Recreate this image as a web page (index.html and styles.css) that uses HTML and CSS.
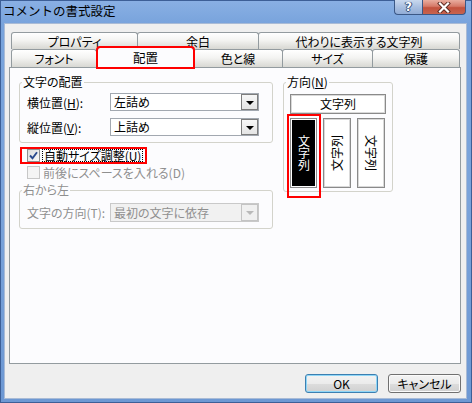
FILE: index.html
```html
<!DOCTYPE html>
<html lang="ja">
<head>
<meta charset="utf-8">
<title>コメントの書式設定</title>
<link rel="stylesheet" href="styles.css">
</head>
<body>
<div class="window">
  <div class="titlebar">
    <span class="title">コメントの書式設定</span>
    <div class="caption">
      <span class="cbtn help">?</span>
      <span class="cbtn close">
        <svg width="14" height="11" viewBox="0 0 14 11"><path d="M3 1.5 L11 9.5 M11 1.5 L3 9.5" stroke="#5a2a22" stroke-width="4" stroke-linecap="square"/><path d="M3 1.5 L11 9.5 M11 1.5 L3 9.5" stroke="#fff" stroke-width="2.2" stroke-linecap="square"/></svg>
      </span>
    </div>
  </div>
  <div class="client">
    <div class="tabrow row1">
      <div class="tab t-prop">プロパティ</div>
      <div class="tab t-margin">余白</div>
      <div class="tab t-alt">代わりに表示する文字列</div>
    </div>
    <div class="tabrow row2">
      <div class="tab t-font">フォント</div>
      <div class="tab t-align selected">配置</div>
      <div class="tab t-color">色と線</div>
      <div class="tab t-size">サイズ</div>
      <div class="tab t-protect">保護</div>
    </div>
    <div class="panel">
      <div class="col-left">
        <fieldset class="group g-align">
          <legend>文字の配置</legend>
          <div class="g-body">
            <div class="field"><span class="label">横位置(<u>H</u>):</span><div class="combo"><span class="value">左詰め</span><span class="arrow"></span></div></div>
            <div class="field"><span class="label">縦位置(<u>V</u>):</span><div class="combo"><span class="value">上詰め</span><span class="arrow"></span></div></div>
          </div>
        </fieldset>
        <div class="check-row highlight">
          <span class="checkbox checked"><svg width="11" height="11" viewBox="0 0 11 11"><path d="M2 5.5 L4.5 8.2 L9 2.2" fill="none" stroke="#2b4a8e" stroke-width="1.9"/></svg></span>
          <span class="focus-text">自動サイズ調整(<u>U</u>)</span>
        </div>
        <div class="check-row disabled">
          <span class="checkbox"></span>
          <span>前後にスペースを入れる(D)</span>
        </div>
        <fieldset class="group g-rtl disabled">
          <legend>右から左</legend>
          <div class="g-body">
            <div class="field"><span class="label">文字の方向(T):</span><div class="combo combo-disabled"><span class="value">最初の文字に依存</span><span class="arrow"></span></div></div>
          </div>
        </fieldset>
      </div>
      <div class="col-right">
        <fieldset class="group g-orient">
          <legend>方向(<u>N</u>)</legend>
          <div class="g-body orient-body">
            <div class="orient-h">文字列</div>
            <div class="orient-row">
              <div class="vbtn v-upright selected"><span>文字列</span></div>
              <div class="vbtn v-ccw"><span>文字列</span></div>
              <div class="vbtn v-cw"><span>文字列</span></div>
            </div>
          </div>
        </fieldset>
      </div>
    </div>
    <div class="buttons">
      <button class="btn default">OK</button>
      <button class="btn">キャンセル</button>
    </div>
  </div>
</div>
</body>
</html>
```

FILE: styles.css
```css
* { box-sizing: border-box; }
html, body { margin: 0; padding: 0; }
body {
  width: 472px;
  height: 403px;
  overflow: hidden;
  font-family: "Noto Sans CJK JP", "Noto Sans", sans-serif;
  font-size: 12px;
  color: #000;
  font-feature-settings: "palt";
}

.window {
  width: 472px;
  height: 403px;
  display: flex;
  flex-direction: column;
  padding: 0 5px 4px 4px;
  background: linear-gradient(#8ab0e4, #78a3dc 24px, #7aa3da 200px, #6d98d3);
  box-shadow: inset 0 0 0 1px #3d5f97;
}

.titlebar {
  height: 23px;
  flex: none;
  display: flex;
  justify-content: space-between;
  align-items: flex-start;
}
.title {
  margin-left: -1px;
  line-height: 22px;
  font-size: 12.5px;
  font-feature-settings: normal;
}
.caption { display: flex; margin-right: 1px; }
.cbtn {
  height: 15px;
  border: 1px solid #3b5886;
  border-top: none;
  display: flex;
  align-items: center;
  justify-content: center;
}
.help {
  width: 28px;
  border-right: none;
  border-radius: 0 0 0 4px;
  background: linear-gradient(#c9d8ee, #a9bfe0 50%, #91acd6);
  color: #fff;
  font: bold 12px "DejaVu Sans", sans-serif;
  text-shadow: 0 0 1px #203a66, 1px 0 0 #3a5580, -1px 0 0 #3a5580, 0 1px 0 #3a5580;
}
.close {
  width: 44px;
  border-radius: 0 0 4px 0;
  background: linear-gradient(#e9ad9f, #d57968 45%, #c2513d 55%, #c8644e);
}

.client {
  flex: 1;
  display: flex;
  flex-direction: column;
  background: #efefef;
  border: 1px solid #a9bbd6;
  padding: 8px 5px 0 4px;
}

.tabrow { display: flex; margin: 0 1px 0 2px; flex: none; }
.row1 { height: 17px; }
.row2 { height: 18px; }
.tab {
  border: 1px solid #939b9f;
  border-bottom: none;
  border-radius: 3px 3px 0 0;
  background: linear-gradient(#ffffff, #f4f4f2 45%, #e2e2de 80%, #d8d8d3);
  display: flex;
  align-items: center;
  justify-content: center;
  line-height: 1;
  padding-top: 1px;
}
.tab + .tab { margin-left: -1px; }
.t-prop { width: 127px; }
.t-margin { width: 122px; }
.t-alt { width: 202px; }
.t-font { width: 86px; }
.t-align { width: 97px; }
.t-color { width: 90px; }
.t-size { width: 91px; }
.t-protect { width: 88px; }
.tab.selected {
  margin-left: 0;
  margin-top: -2px;
  height: 21px;
  margin-bottom: -1px;
  background: #fcfcfe;
  position: relative;
  z-index: 2;
  font-size: 12.5px;
  outline: 2px solid #ff0000;
  outline-offset: -1px;
}
.tab.selected + .tab { margin-left: -1px; }

.panel {
  height: 297px;
  flex: none;
  background: #fcfcfe;
  border: 1px solid #939b9f;
  display: flex;
  align-items: flex-start;
  gap: 10px;
  padding: 7px 0 0 9px;
}
.col-left { width: 254px; display: flex; flex-direction: column; }
.col-right { width: 110px; }

.group {
  margin: 0;
  padding: 0;
  min-width: 0;
  border: 1px solid #d3d3cb;
  border-radius: 3px;
}
.group legend {
  margin-left: 2px;
  padding: 0 1px;
  line-height: 14px;
  height: 14px;
}
.g-body {
  display: flex;
  flex-direction: column;
  gap: 7px;
  padding: 4px 13px 6px 7px;
}
.g-rtl .g-body { padding: 6px 13px 6px 7px; }
.disabled { color: #8f8f8f; }

.field { display: flex; align-items: center; }
.label { width: 83px; flex: none; }
.combo {
  width: 149px;
  height: 18px;
  border: 1px solid #a2a8b0;
  background: #fff;
  display: flex;
  align-items: center;
}
.combo-disabled { height: 19px; background: #f1f1f1; border-color: #c9c9c9; }
.value { padding-left: 3px; flex: 1; line-height: 1; }
.arrow {
  width: 17px;
  height: 100%;
  border: 1px solid #7d7d7d;
  background: linear-gradient(#f7f7f7, #e4e4e4);
  display: flex;
  align-items: center;
  justify-content: center;
}
.arrow::after {
  content: "";
  border-left: 4px solid transparent;
  border-right: 4px solid transparent;
  border-top: 4px solid #000;
  margin-top: 1px;
}
.combo-disabled .arrow { border-color: #c4c4c4; background: #f0f0f0; }
.combo-disabled .arrow::after { border-top-color: #b9b9b9; }

.check-row {
  display: flex;
  align-items: center;
  height: 13px;
  gap: 3px;
  padding-left: 8px;
  margin-top: 4px;
}
.check-row.highlight {
  margin-top: 6px;
  margin-left: 3px;
  padding-left: 5px;
  width: 123px;
  outline: 2px solid #ff0000;
}
.checkbox {
  width: 13px;
  height: 13px;
  flex: none;
  border: 1px solid #8e8f8f;
  background: linear-gradient(135deg, #dcdcdc, #fafafa);
  display: flex;
  align-items: center;
  justify-content: center;
}
.check-row.disabled .checkbox { border-color: #c7c7c7; background: #f4f4f4; }
.focus-text {
  border: 1px dotted #000;
  line-height: 11px;
  padding: 0 1px;
  height: 13px;
  display: flex;
  align-items: center;
  margin-left: -1px;
}
.g-rtl { margin-top: 4px; }

.orient-body { padding: 5px 6px 3px 6px; gap: 4px; }
.orient-h {
  height: 20px;
  border: 1px solid #8a8a8a;
  box-shadow: inset 0 0 0 1px #d9d9d9;
  background: #fff;
  display: flex;
  align-items: center;
  justify-content: center;
  line-height: 1;
}
.orient-row { display: flex; gap: 6px; }
.vbtn {
  width: 28px;
  height: 70px;
  border: 1px solid #8a8a8a;
  box-shadow: inset 0 0 0 1px #d9d9d9;
  background: #fff;
  display: flex;
  align-items: center;
  justify-content: center;
  position: relative;
}
.vbtn span { white-space: nowrap; line-height: 1; }
.v-upright { width: 27px; }
.v-upright span { writing-mode: vertical-rl; text-orientation: upright; font-feature-settings: normal; }
.vbtn.selected { background: #000; color: #fff; box-shadow: inset 0 0 0 1px #fff; }
.vbtn.selected::after {
  content: "";
  position: absolute;
  left: -4px;
  right: -5px;
  top: -5px;
  bottom: -11px;
  border: 2px solid #ff0000;
}
.v-ccw span { transform: rotate(-90deg); }
.v-cw span { transform: rotate(90deg); }

.buttons {
  display: flex;
  justify-content: flex-end;
  gap: 10px;
  margin-top: 10px;
}
.btn {
  width: 73px;
  height: 19px;
  padding: 0;
  font: inherit;
  color: #000;
  border: 1px solid #707070;
  border-radius: 3px;
  background: linear-gradient(#f3f3f3, #ebebeb 50%, #dddddd 51%, #d0d0d0);
  box-shadow: inset 0 0 0 1px #fbfbfb;
  line-height: 1;
}
.btn.default { border-color: #3c7fb1; box-shadow: inset 0 0 0 1px #8fd6f7; }
```
